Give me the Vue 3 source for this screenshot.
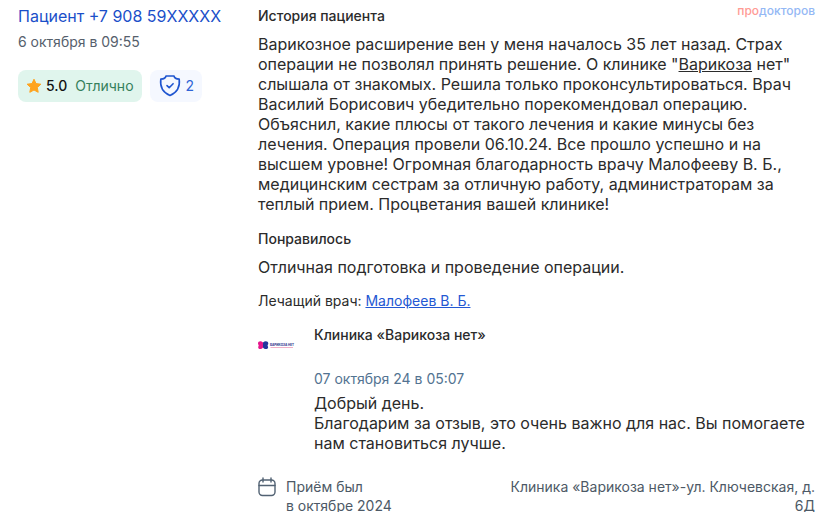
<script setup>
const review = {
  author: 'Пациент +7 908 59XXXXX',
  date: '6 октября в 09:55',
  score: '5.0',
  verdict: 'Отлично',
  confirmations: 2,
}
</script>

<template>
  <article class="review">
    <aside class="side">
      <a class="author" href="#">{{ review.author }}</a>
      <time class="date">{{ review.date }}</time>
      <div class="badges">
        <div class="badge score">
          <svg width="16" height="16" viewBox="0 0 16 16" aria-hidden="true">
            <path d="M8 1.2l2 4.4 4.9.6-3.6 3.3.9 4.8L8 12l-4.200 2.300.9-4.800L1.100 6.200 6 5.600z" fill="#ffa41f" stroke="#ffa41f" stroke-width="1" stroke-linejoin="round" />
          </svg>
          <span class="value">{{ review.score }}</span>
          <span class="verdict">{{ review.verdict }}</span>
        </div>
        <button class="badge shield" type="button">
          <svg width="24" height="22" viewBox="0 0 24 22" fill="none" stroke="#1f55d0" stroke-width="1.600" stroke-linecap="round" stroke-linejoin="round" aria-hidden="true">
            <path d="M8 1h8c.3 1.800 1.800 3 5.200 3.100.9 7-1.300 13-9.200 16.400C4.100 17.100 1.900 11.100 2.800 4.100 6.200 4 7.700 2.800 8 1z" />
            <path d="M9 10.600l2.200 2.100 3.900-4" />
          </svg>
          <span>{{ review.confirmations }}</span>
        </button>
      </div>
    </aside>

    <div class="main">
      <header class="head">
        <h3 class="title">История пациента</h3>
        <span class="brand"><span class="brand-pro">про</span>докторов</span>
      </header>
      <p class="text">
        Варикозное расширение вен у меня началось 35 лет назад. Страх операции не позволял принять решение. О клинике "<span class="marked">Варикоза</span> нет" слышала от знакомых. Решила только проконсультироваться. Врач Василий Борисович убедительно порекомендовал операцию. Объяснил, какие плюсы от такого лечения и какие минусы без лечения. Операция провели 06.10.24. Все прошло успешно и на высшем уровне! Огромная благодарность врачу Малофееву В. Б., медицинским сестрам за отличную работу, администраторам за теплый прием. Процветания вашей клинике!
      </p>

      <h3 class="title liked">Понравилось</h3>
      <p class="text">Отличная подготовка и проведение операции.</p>

      <p class="doctor">Лечащий врач: <a href="#">Малофеев В. Б.</a></p>

      <section class="reply">
        <svg class="logo" width="40" height="40" viewBox="0 0 40 40" role="img" aria-label="Варикоза нет">
          <path d="M5 17.500C3 15.500 0 16 0 18.500c0 1 .7 1.300.7 2s-.7 1-.5 2c.4 2 3.300 2 4.800 0z" fill="#e5168c" />
          <path d="M5 17.500c2-2 5.300-1.500 5.300 1 0 1-.7 1.300-.7 2s.7 1 .5 2c-.4 2-3.600 2-5.100 0z" fill="#24359c" />
          <text x="12" y="20.600" class="logo-name">ВАРИКОЗА НЕТ</text>
          <path d="M12.500 22.500H35" stroke="#ef9bb9" stroke-width=".8" />
        </svg>
        <div class="reply-body">
          <h4 class="clinic">Клиника «Варикоза нет»</h4>
          <time class="reply-date">07 октября 24 в 05:07</time>
          <p class="text">Добрый день.<br />Благодарим за отзыв, это очень важно для нас. Вы помогаете нам становиться лучше.</p>
        </div>
      </section>

      <footer class="foot">
        <svg width="18" height="20" viewBox="0 0 18 20" fill="none" stroke="#526273" stroke-width="1.400" stroke-linecap="round" aria-hidden="true">
          <rect x="1" y="3" width="16" height="15.500" rx="3.500" />
          <path d="M1 8.500h16M5 1v4M13 1v4" />
        </svg>
        <p class="visit">Приём был<br />в октябре 2024</p>
        <p class="address">Клиника «Варикоза нет»-ул. Ключевская, д. 6Д</p>
      </footer>
    </div>
  </article>
</template>

<style>
body {
  margin: 0;
  background: #fff;
}
</style>

<style scoped>
.review {
  display: grid;
  grid-template-columns: 208px minmax(0, 1fr);
  column-gap: 32px;
  padding: 6px 17px 0 18px;
  font-family: Inter, "Liberation Sans", sans-serif;
  font-size: 14px;
  line-height: 20px;
  color: #2b2b2b;
}

h3,
h4,
p {
  margin: 0;
}

.side {
  display: flex;
  flex-direction: column;
  align-items: flex-start;
}

.author {
  font-size: 16px;
  color: #1a4fc9;
  text-decoration: none;
  white-space: nowrap;
}

.date {
  margin-top: 6px;
  color: #56606c;
}

.badges {
  display: flex;
  gap: 8px;
  margin-top: 18px;
}

.badge {
  display: flex;
  align-items: center;
  height: 32px;
  padding: 0 8px;
  border: 0;
  border-radius: 8px;
  font: inherit;
}

.score {
  background: #e0f5ed;
}

.value {
  margin: 0 8px 0 4px;
  font-weight: 500;
  color: #111;
}

.verdict {
  color: #35805b;
}

.shield {
  gap: 4px;
  background: #f5f8ff;
  color: #2f64d6;
}

.head {
  display: flex;
  justify-content: space-between;
}

.title,
.clinic {
  font-size: 14px;
  font-weight: 500;
}

.brand {
  font-size: 12px;
  line-height: 10px;
  font-weight: 500;
  color: #94b8f5;
}

.brand-pro {
  color: #ff9a94;
}

.text {
  margin-top: 8px;
  font-size: 16px;
}

.marked {
  text-decoration: underline;
}

.liked {
  margin-top: 15px;
}

.doctor {
  margin-top: 14px;
}

.doctor a {
  color: #2458d3;
}

.reply {
  display: flex;
  gap: 16px;
  margin-top: 14px;
}

.logo {
  flex: none;
}

.logo-name {
  font-size: 3px;
  font-weight: 800;
  fill: #3b4795;
}

.reply-date {
  display: block;
  margin-top: 24px;
  color: #537391;
}

.reply-body .text {
  margin-top: 4px;
}

.foot {
  display: flex;
  gap: 10px;
  margin-top: 24px;
  line-height: 19px;
  color: #4d5966;
}

.foot svg {
  flex: none;
}

.visit {
  flex: none;
}

.address {
  flex: 1;
  padding-left: 96px;
  text-align: right;
}
</style>
